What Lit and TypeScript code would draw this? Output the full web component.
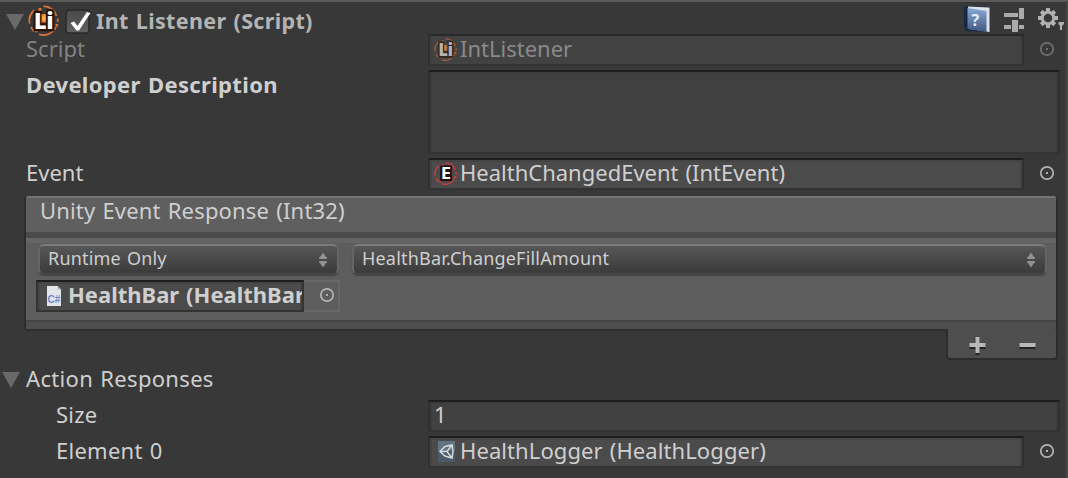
import { LitElement, html, css, svg, nothing } from "lit";
import { customElement, property } from "lit/decorators.js";

const ring = (color: string) => svg`
  <g fill="none" stroke=${color} stroke-width="1.7">
    <path d="M15.5 1.2 A14 14 0 0 1 28.5 11"/>
    <path d="M29.8 13.5 A14 14 0 0 1 29.6 17"/>
    <path d="M28 22 A14 14 0 0 1 11 29.4"/>
    <path d="M6 26.5 A14 14 0 0 1 3 22"/>
    <path d="M1.6 18.5 A14 14 0 0 1 6.4 5"/>
  </g>
  <path d="M10.5 3h3v3h-3zM27.5 19h2.6v2.6h-2.6zM7 24.5h2.8v2.8H7z" fill=${color}/>`;

/** Round badge with a letter mark, used for listener and event scripts. */
@customElement("badge-icon")
export class BadgeIcon extends LitElement {
  @property() kind = "li";
  static styles = css`
    :host { display: block; flex: none; letter-spacing: 0; }
    svg { display: block; width: 100%; height: 100%; overflow: visible; }
    text { font-family: "Open Sans", sans-serif; font-weight: 800; fill: #fff; paint-order: stroke; stroke-linejoin: miter; }
    .li { font-size: 22.5px; stroke: #2b1409; stroke-width: 4.5px; }
    .e { font-size: 22px; font-weight: 700; stroke: #260a0c; stroke-width: 4px; }
  `;
  render() {
    return this.kind === "li"
      ? html`<svg viewBox="0 0 31 31">
          <defs><radialGradient id="g"><stop offset="0" stop-color="#ffd35a"/><stop offset="1" stop-color="#e5772a"/></radialGradient></defs>
          ${ring("#e0733c")}
          <text class="li" x="6" y="23.600" textLength="19.500" lengthAdjust="spacingAndGlyphs">Li</text>
          <rect x="13.500" y="9" width="4.500" height="8.500" fill="url(#g)"/>
        </svg>`
      : html`<svg viewBox="0 0 31 31">
          ${ring("#d63a46")}
          <path d="M8.500 5.500h15v20h-15z" fill="#260a0c"/>
          <text class="e" x="9" y="23.300" textLength="14" lengthAdjust="spacingAndGlyphs">E</text>
        </svg>`;
  }
}

const picker = html`<svg class="picker" viewBox="0 0 16 16" width="16" height="16">
  <circle cx="8" cy="8" r="6.2" fill="none" stroke="currentColor" stroke-width="1.7"/>
  <rect x="7" y="7" width="2" height="2" fill="currentColor"/>
</svg>`;

const foldout = html`<svg class="fold" viewBox="0 0 18 16" width="18" height="16"><path d="M0 0h18L9 16z" fill="#696969"/></svg>`;

const arrows = html`<svg class="arrows" viewBox="0 0 10 18" width="10" height="18">
  <path d="M5 1.500 8 6h.8v2H1.200V6H2zM5 16.500 8 12h.8v-2H1.200v2H2z" fill="#929292"/>
</svg>`;

@customElement("app-root")
export class AppRoot extends LitElement {
  static styles = css`
    :host {
      display: block;
      width: 1068px;
      height: 478px;
      overflow: hidden;
      box-sizing: border-box;
      background: #383838;
      border-top: 2px solid #5a5a5a;
      border-right: 2px solid #484848;
      font: 22px/28px "Noto Sans", sans-serif;
      word-spacing: 1.2px;
      color: #cfcfcf;
      white-space: nowrap;
    }
    * { box-sizing: border-box; }
    svg { display: block; flex: none; }
    .head { display: flex; height: 32px; padding: 3px 0 0 6px; }
    .head .fold { margin-top: 9px; }
    .head badge-icon { width: 31px; height: 31px; margin-left: 4px; }
    .check { margin: 4px 0 0 6px; }
    .title { font-weight: 700; font-size: 21.5px; line-height: 31px; color: #b4b4b4; margin: 0 0 0 5px; letter-spacing: 0.34px; }
    .tools { display: flex; margin-left: auto; }
    .row { display: grid; grid-template-columns: 402px 596px 1fr; height: 30px; margin: 0 6px 6px 26px; }
    .row.tall { height: 82px; }
    .row.wide { grid-template-columns: 402px 632px; }
    .indent { padding-left: 30px; letter-spacing: 0.25px; }
    .bold { font-weight: 700; letter-spacing: 0.34px; }
    .dim { color: #838383; }
    .field {
      display: flex;
      align-items: flex-start;
      min-width: 0;
      height: 32px;
      background: #4b4b4b;
      border: 2px solid #303030;
      border-top-color: #1d1d1d;
      border-bottom-color: #333;
      box-shadow: inset 2px 0 #444, inset -2px 0 #444, inset 0 2px #454545;
      line-height: 24px;
      padding-left: 4px;
    }
    .plain { background: #414141; box-shadow: inset 2px 0 #3b3b3b, inset -2px 0 #3b3b3b, inset 0 2px #3c3c3c; }
    .tall .field { height: 84px; }
    .field badge-icon { width: 23px; height: 23px; margin: 2px 3px 0 0; }
    .off { color: #8a8a8a; background: #424242; border-top-color: #292929; box-shadow: inset 2px 0 #3e3e3e, inset -2px 0 #3e3e3e; }
    .off badge-icon { opacity: 0.6; }
    .picker { color: #b4b4b4; margin: 7px 0 0 15px; }
    .off + .picker { color: #707070; }
    .list {
      width: 1034px;
      height: 135px;
      margin: 8px 0 0 24px;
      border: 2px solid #2d2d2d;
      border-top: 0;
      border-radius: 4px;
      background: #5d5d5d;
      overflow: hidden;
    }
    .list-head { height: 36px; border-top: 2px solid #747474; padding-left: 14px; line-height: 25px; letter-spacing: 0.17px; background: #5f5f5f; }
    .list-body { height: 90px; border-top: 6px solid #4b4b4b; border-bottom: 2px solid #444; padding: 5px 10px 0 12px; box-shadow: inset 0 5px #656565; }
    .list-foot { height: 9px; background: #4e4e4e; border-bottom: 2px solid #434343; }
    .drops { display: grid; grid-template-columns: 301px 695px; gap: 13px; margin-top: 1px; }
    .drop {
      display: flex;
      justify-content: space-between;
      height: 31px;
      border: 2px solid #666;
      border-top-color: #7b7b7b;
      border-bottom-color: #444;
      border-radius: 6px;
      background: linear-gradient(#575757, #3b3b3b);
      box-shadow: 0 1px 1px #454545;
      font-size: 18px;
      line-height: 25px;
      letter-spacing: 0.19px;
      padding: 0 9px 0 8px;
    }
    .arrows { margin-top: 5px; }
    .target { display: flex; width: 304px; height: 32px; margin: 5px 0 0 -2px; }
    .target .field { width: 268px; overflow: hidden; border-color: #333; border-top-color: #1d1d1d; font-weight: 700; }
    .pick-cell { width: 36px; border: 2px solid #686868; border-left: 0; }
    .pick-cell .picker { margin: 5px 0 0 15px; }
    .cs { margin: 3px 6px 0 4px; }
    .cs text { font: 700 11px "Liberation Sans", sans-serif; fill: #6d88cc; }
    .asset { margin: 3px 5px 0 4px; }
    .buttons {
      display: flex;
      gap: 33px;
      width: 112px;
      height: 31px;
      margin: -2px 0 4px 946px;
      padding: 8px 0 0 21px;
      background: #4e4e4e;
      border: 2px solid #2d2d2d;
      border-top: 0;
      border-radius: 0 0 4px 4px;
      position: relative;
    }
    .action { display: flex; height: 30px; padding-left: 2px; margin-bottom: 6px; letter-spacing: 0.32px; }
    .action .fold { margin: 8px 6px 0 0; }
    .logger { letter-spacing: 0.09px; }
  `;

  private row(label: string, value: unknown, opts: { label?: string; field?: string; row?: string; pick?: boolean } = {}) {
    return html`<div class="row ${opts.row ?? ""}">
      <span class=${opts.label ?? ""}>${label}</span><div class="field ${opts.field ?? ""}">${value}</div>${opts.pick ? picker : nothing}</div>`;
  }

  render() {
    return html`<div class="head">${foldout}<badge-icon kind="li"></badge-icon><svg class="check" viewBox="0 0 26 26" width="26" height="26">
          <defs><linearGradient id="c" x2="0" y2="1"><stop stop-color="#484848"/><stop offset="1" stop-color="#626262"/></linearGradient></defs>
          <rect x="1" y="1" width="23" height="23" rx="3" fill="url(#c)" stroke="#282828" stroke-width="1.5"/>
          <path d="M5.500 14 9 12.500 12.500 17 22 3 25.500 4 14 21.500h-2.500z" fill="#fff"/>
        </svg><span class="title">Int Listener (Script)</span><div class="tools">
          <svg width="102" height="32" viewBox="964 5 102 32">
            <defs><linearGradient id="b" x2="0" y2="1"><stop stop-color="#88aad8"/><stop offset="1" stop-color="#40577e"/></linearGradient></defs>
            <path d="M965 6 988 7v25l-22-1-2-4V9z" fill="#192842"/>
            <path d="M968 6.500 989.500 7.500v24.500l-19-3z" fill="#dce3eb"/>
            <path d="M967.500 8 986.500 11v21l-19-3z" fill="url(#b)"/>
            <text x="971.500" y="26" font-family="Noto Sans" font-size="16" font-weight="700" fill="#e7eefb">?</text>
            <path d="M1004 13h14v4h-14zM1019 8h5v11h-5zM1004 25h7v4h-7zM1012 20h6v12h-6zM1019 25h5v4h-5z" fill="#aaa"/>
            <g transform="translate(1048 18)">
              <g fill="#b0b0b0"><path d="M-2-10h4v5h-4zM-2 5h4v5h-4zM-10-2h5v4h-5zM5-2h5v4H5z"/>
              <path transform="rotate(45)" d="M-2-9.5h4v5h-4zM-2 5h4v4.5h-4zM-9.5-2h5v4h-5zM5-2h4.5v4H5z"/></g>
              <circle r="5.8" fill="none" stroke="#b0b0b0" stroke-width="3"/>
            </g>
            <path d="M1058.5 22h5.5v2l-2 2v4h-2v-4l-1.5-2z" fill="#b0b0b0"/>
          </svg></div></div>
      ${this.row("Script", html`<badge-icon kind="li"></badge-icon><span>IntListener</span>`, { label: "dim", field: "off", pick: true })}
      ${this.row("Developer Description", nothing, { label: "bold", field: "plain", row: "tall wide" })}
      ${this.row("Event", html`<badge-icon kind="e"></badge-icon><span>HealthChangedEvent (IntEvent)</span>`, { pick: true })}
      <div class="list">
        <div class="list-head">Unity Event Response (Int32)</div>
        <div class="list-body">
          <div class="drops">
            <div class="drop"><span>Runtime Only</span>${arrows}</div>
            <div class="drop"><span>HealthBar.ChangeFillAmount</span>${arrows}</div>
          </div>
          <div class="target">
            <div class="field"><svg class="cs" width="16" height="22" viewBox="0 0 16 22">
              <path d="M1 1h10.5L15 4.5V21H1z" fill="#e3e6ea"/><path d="M11.5 1 15 4.5h-3.500z" fill="#aeb4bb"/>
              <text x="1.500" y="17.500" textLength="13" lengthAdjust="spacingAndGlyphs">C#</text></svg><span>HealthBar (HealthBar</span></div>
            <div class="pick-cell">${picker}</div>
          </div>
        </div>
        <div class="list-foot"></div>
      </div>
      <div class="buttons">
        <svg width="17" height="18" viewBox="0 0 17 18"><path d="M6.500 2h4v6h6v4h-6v6h-4v-6h-6V8h6z" fill="#222"/><path d="M6.500 0h4v6h6v4h-6v6h-4v-6h-6V6h6z" fill="#b8b8b8"/></svg>
        <svg width="17" height="18" viewBox="0 0 17 18"><path d="M.5 8h16v4H.5z" fill="#222"/><path d="M.5 6h16v4H.5z" fill="#b8b8b8"/></svg>
      </div>
      <div class="action">${foldout}<span>Action Responses</span></div>
      ${this.row("Size", "1", { label: "indent", field: "plain", row: "wide" })}
      ${this.row("Element 0", html`<svg class="asset" width="17" height="22" viewBox="0 0 17 22">
          <rect width="17" height="21" fill="#4b5c68"/><rect width="17" height="10" fill="#627480"/>
          <path d="M2 10.500 7 5.500 14 4l1 6.500L14 17l-7-2zM2 10.500h7L14 4M9 10.500 14 17" fill="none" stroke="#d5dadd" stroke-width="1.500"/>
        </svg><span class="logger">HealthLogger (HealthLogger)</span>`, { label: "indent", pick: true })}
    `;
  }
}
